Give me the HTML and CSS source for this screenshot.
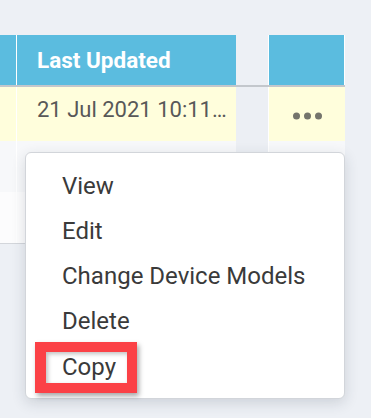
FILE: index.html
```html
<!DOCTYPE html>
<html lang="en">
<head>
    <meta charset="UTF-8">
    <meta name="viewport" content="width=device-width, initial-scale=1.0">
    <title>Device Groups</title>
    <link rel="stylesheet" href="styles.css">
</head>
<body>
    <div class="grid">
        <div class="row head">
            <div class="cell c1"></div>
            <div class="cell c2">Last Updated</div>
            <div class="cell gap"></div>
            <div class="cell act"></div>
        </div>
        <div class="row selected">
            <div class="cell c1"></div>
            <div class="cell c2"><span class="clip">21 Jul 2021 10:11:42 AM</span></div>
            <div class="cell gap"></div>
            <div class="cell act">
                <svg class="dots" width="29" height="8" viewBox="0 0 29 8">
                    <circle cx="3.5" cy="4" r="3.5"/>
                    <circle cx="14.5" cy="4" r="3.5"/>
                    <circle cx="25.5" cy="4" r="3.5"/>
                </svg>
            </div>
        </div>
        <div class="row">
            <div class="cell c1"></div>
            <div class="cell c2"></div>
            <div class="cell gap"></div>
            <div class="cell act"></div>
        </div>
        <div class="row last">
            <div class="cell c1"></div>
            <div class="cell c2"></div>
            <div class="cell gap"></div>
            <div class="cell act"></div>
        </div>
    </div>

    <ul class="menu">
        <li>View</li>
        <li>Edit</li>
        <li>Change Device Models</li>
        <li>Delete</li>
        <li class="marked"><span>Copy</span></li>
    </ul>
</body>
</html>
```

FILE: styles.css
```css
body {
    margin: 0;
    background-color: #edf0f5;
    font-family: Roboto, "Liberation Sans", sans-serif;
    position: relative;
    height: 418px;
    overflow: hidden;
}
.grid {
    padding-top: 35px;
    width: 345px;
}
.row {
    display: grid;
    grid-template-columns: 16px 220px 32px 77px;
    height: 51px;
    background: #f7f8fa;
}
.row .gap {
    background: #eceff4;
}
.cell.c2, .cell.act {
    border-left: 1px solid #ffffff;
}
.head {
    height: 50px;
    background: none;
    border-bottom: 2px solid #c3c7cc;
}
.head .cell {
    background: #5bbcdf;
    color: #ffffff;
    font-weight: bold;
    font-size: 22.5px;
    display: flex;
    align-items: center;
    padding-left: 20px;
}
.head .c1 {
    padding-left: 0;
}
.head .gap {
    background: #edf0f5;
}
.head .act {
    padding-left: 0;
    border-right: 1px solid #ffffff;
}
.selected {
    height: 54px;
    background: #fffedc;
}
.selected .c2 {
    padding: 11px 5px 0 20px;
    font-size: 22px;
    line-height: 24px;
    color: #585858;
    overflow: hidden;
}
.clip {
    display: block;
    white-space: nowrap;
    overflow: hidden;
    text-overflow: ellipsis;
}
.selected .act {
    display: flex;
    justify-content: center;
    align-items: center;
    padding-top: 4px;
}
.dots {
    fill: #74746c;
}
.last {
    background: #fcfcfd;
    border-bottom: 1px solid #d3d6db;
}
.menu {
    position: absolute;
    left: 25px;
    top: 152px;
    width: 318px;
    margin: 0;
    padding: 10px 0;
    list-style: none;
    background: #ffffff;
    border: 1px solid #d2d5da;
    border-radius: 6px;
    box-shadow: 0 4px 14px rgba(40, 50, 70, 0.16);
}
.menu li {
    height: 45px;
    display: flex;
    align-items: center;
    padding-left: 36px;
    font-size: 24px;
    color: #3a3a3a;
}
.menu .marked span {
    margin: 4px 0 0 -27px;
    padding: 0 11px 0 16px;
    line-height: 31px;
    border: 10px solid #fb4146;
    border-left-width: 11px;
    box-shadow: 2px 3px 5px rgba(0, 0, 0, 0.35), inset 2px 2px 4px rgba(0, 0, 0, 0.25);
}
```
